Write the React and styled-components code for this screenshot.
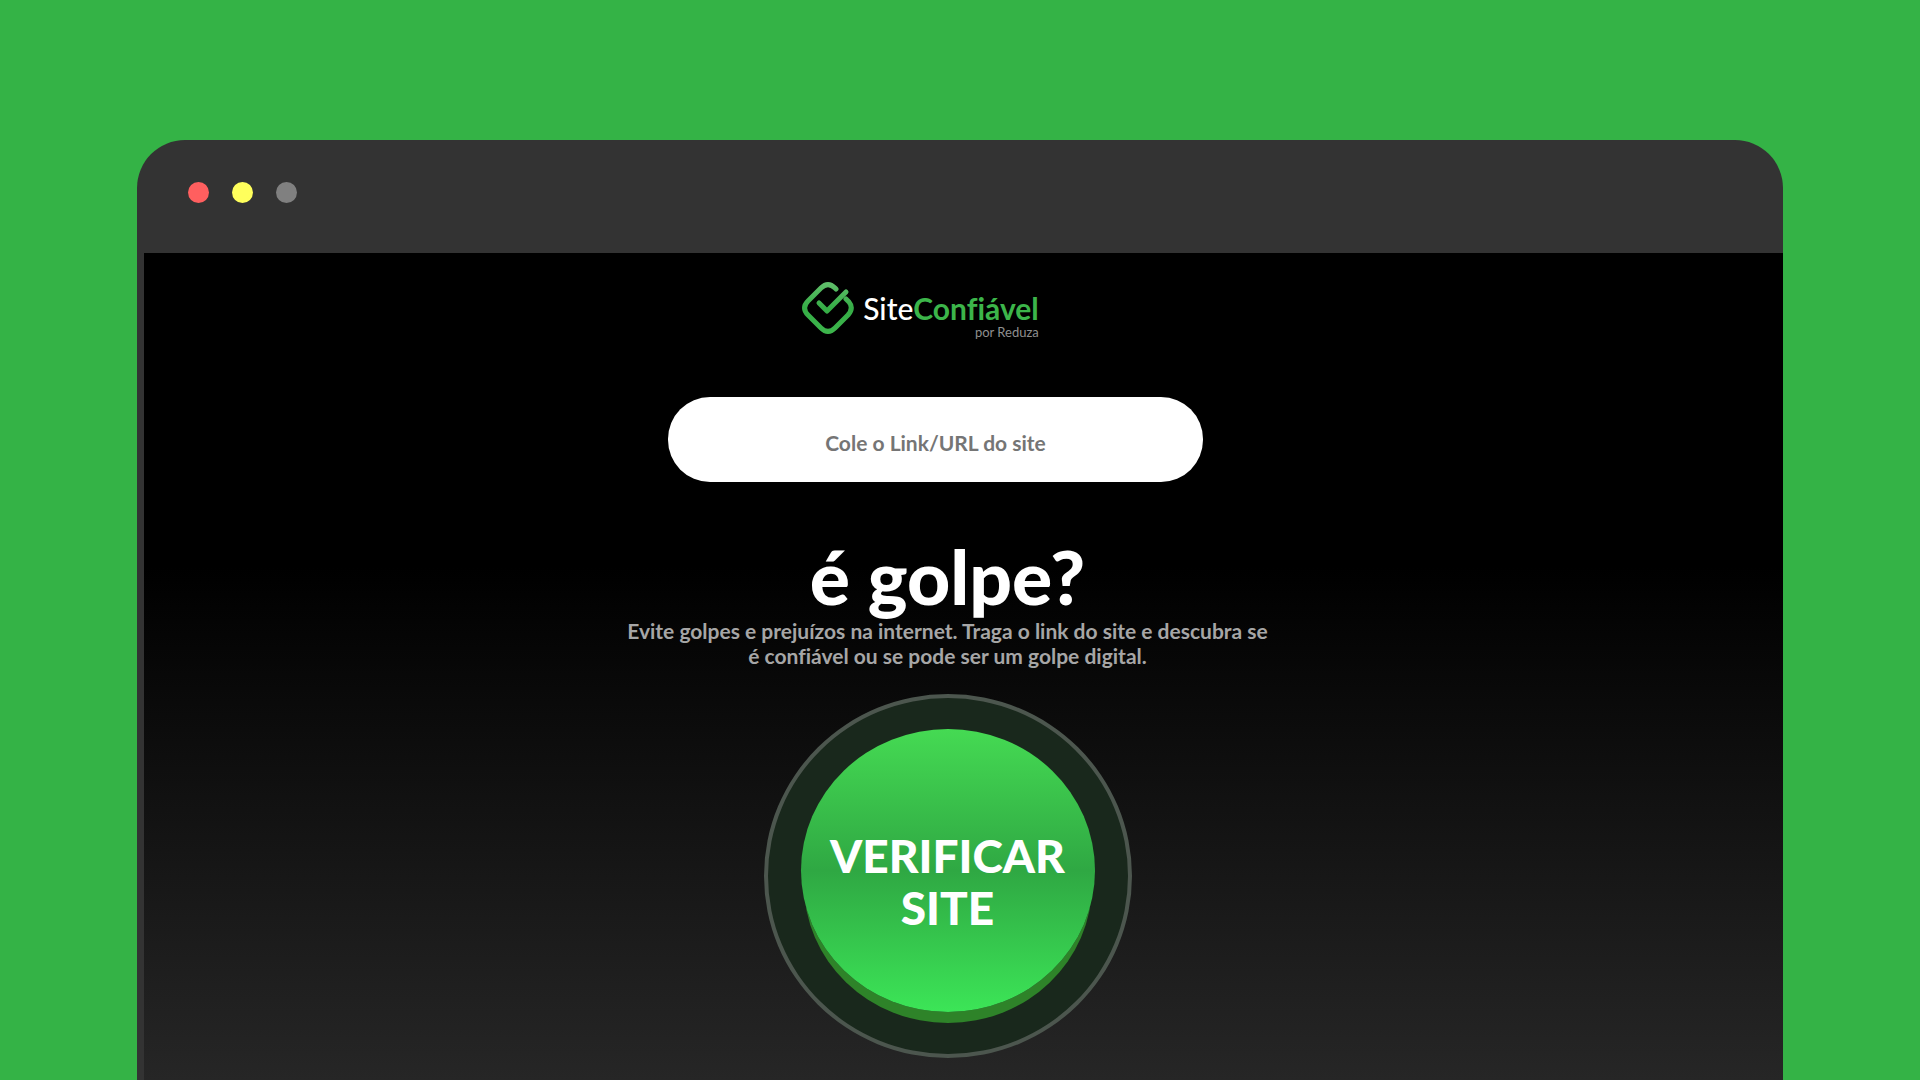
import React from "react";
import styled, { createGlobalStyle } from "styled-components";

const GlobalStyle = createGlobalStyle`
  * {
    box-sizing: border-box;
  }

  body {
    margin: 0;
    background: #34b346;
    font-family: Lato, "Open Sans", "Liberation Sans", sans-serif;
    font-variant-ligatures: none;
  }
`;

/* Page */
const Page = styled.div`
  display: flex;
  flex-direction: column;
  min-height: 100vh;
  padding: 140px 137px 0;
`;

/* Browser window */
const Window = styled.div`
  display: flex;
  flex: 1;
  flex-direction: column;
  padding-left: 7px;
  border-radius: 48px 48px 0 0;
  background: #333333;
`;

const TitleBar = styled.div`
  display: flex;
  align-items: flex-start;
  gap: 23px;
  height: 113px;
  padding: 42px 44px;
`;

const Dot = styled.span`
  width: 21px;
  height: 21px;
  border-radius: 50%;
  background: ${props => props.$color};
`;

/* Site inside the window */
const Content = styled.main`
  display: flex;
  flex: 1;
  flex-direction: column;
  align-items: center;
  padding: 29px 32px 22px 0;
  background: linear-gradient(#000000 38%, #262626 100%);
`;

/* Logo */
const Logo = styled.a`
  display: flex;
  gap: 9px;
  margin-right: 54px;
  text-decoration: none;
`;

const LogoText = styled.span`
  display: flex;
  flex-direction: column;
  align-items: flex-end;
  padding-top: 9px;
`;

const LogoName = styled.span`
  color: white;
  font-size: 30px;
  font-weight: 500;
  line-height: 34px;
`;

const LogoStrong = styled.strong`
  color: #3cb54a;
  font-weight: 700;
`;

const LogoBy = styled.span`
  color: #8f8f8f;
  font-size: 13px;
  line-height: 14px;
`;

/* Link field */
const UrlInput = styled.input`
  width: 535px;
  max-width: 100%;
  height: 85px;
  margin: 58px 24px 0 0;
  padding: 6px 40px 0;
  border: none;
  border-radius: 42px;
  background: white;
  color: #333333;
  font-family: inherit;
  font-size: 21px;
  font-weight: 700;
  text-align: center;

  &::placeholder {
    color: #757575;
    opacity: 1;
  }
`;

/* Headline */
const Title = styled.h1`
  margin: 56px 0 0;
  color: white;
  font-size: 75px;
  font-weight: 900;
  line-height: 76px;
`;

const Lead = styled.p`
  max-width: 650px;
  margin: 4px 0 26px;
  color: #a6a6a6;
  font-size: 21px;
  font-weight: 700;
  line-height: 25px;
  text-align: center;
`;

/* Round button */
const Ring = styled.div`
  padding: 31px 33px 42px;
  border: 4px solid #4c564e;
  border-radius: 50%;
  background: #19281c;
`;

const VerifyButton = styled.button`
  display: block;
  width: 294px;
  height: 283px;
  padding: 22px 20px 0;
  border: none;
  border-radius: 50%;
  background: linear-gradient(#45da53, #2fa843 50%, #3ce557);
  box-shadow: 0 14px 0 -3px #2e8329;
  color: white;
  font-family: inherit;
  font-size: 46px;
  font-weight: 900;
  line-height: 52px;
  cursor: pointer;
`;

function LogoMark() {
  return (
    <svg width="52" height="52" viewBox="0 0 52 52" fill="none" aria-hidden="true">
      <defs>
        <linearGradient id="mark" x1="0" y1="0" x2="0" y2="52" gradientUnits="userSpaceOnUse">
          <stop offset="0" stopColor="#62bf6c" />
          <stop offset="0.5" stopColor="#35ad46" />
          <stop offset="1" stopColor="#3db54c" />
        </linearGradient>
      </defs>
      <g stroke="url(#mark)" strokeWidth="5" strokeLinecap="round" strokeLinejoin="round">
        <path d="M34 7L33 6Q26 -1 19 6L6 19Q-1 26 6 33L19 46Q26 53 33 46L46 33Q52 26 47 20L44 17" />
        <path d="M17 21L25 29L44 10" />
      </g>
    </svg>
  );
}

export default function App() {
  return (
    <Page>
      <GlobalStyle />
      <Window>
        <TitleBar>
          <Dot $color="#ff5f5f" />
          <Dot $color="#ffff5c" />
          <Dot $color="#808080" />
        </TitleBar>

        <Content>
          <Logo href="#">
            <LogoMark />
            <LogoText>
              <LogoName>
                Site<LogoStrong>Confiável</LogoStrong>
              </LogoName>
              <LogoBy>por Reduza</LogoBy>
            </LogoText>
          </Logo>

          <UrlInput
            type="url"
            aria-label="Cole o Link/URL do site"
            placeholder="Cole o Link/URL do site"
          />

          <Title>é golpe?</Title>
          <Lead>
            Evite golpes e prejuízos na internet. Traga o link do site e descubra se
            é confiável ou se pode ser um golpe digital.
          </Lead>

          <Ring>
            <VerifyButton type="button">VERIFICAR SITE</VerifyButton>
          </Ring>
        </Content>
      </Window>
    </Page>
  );
}
